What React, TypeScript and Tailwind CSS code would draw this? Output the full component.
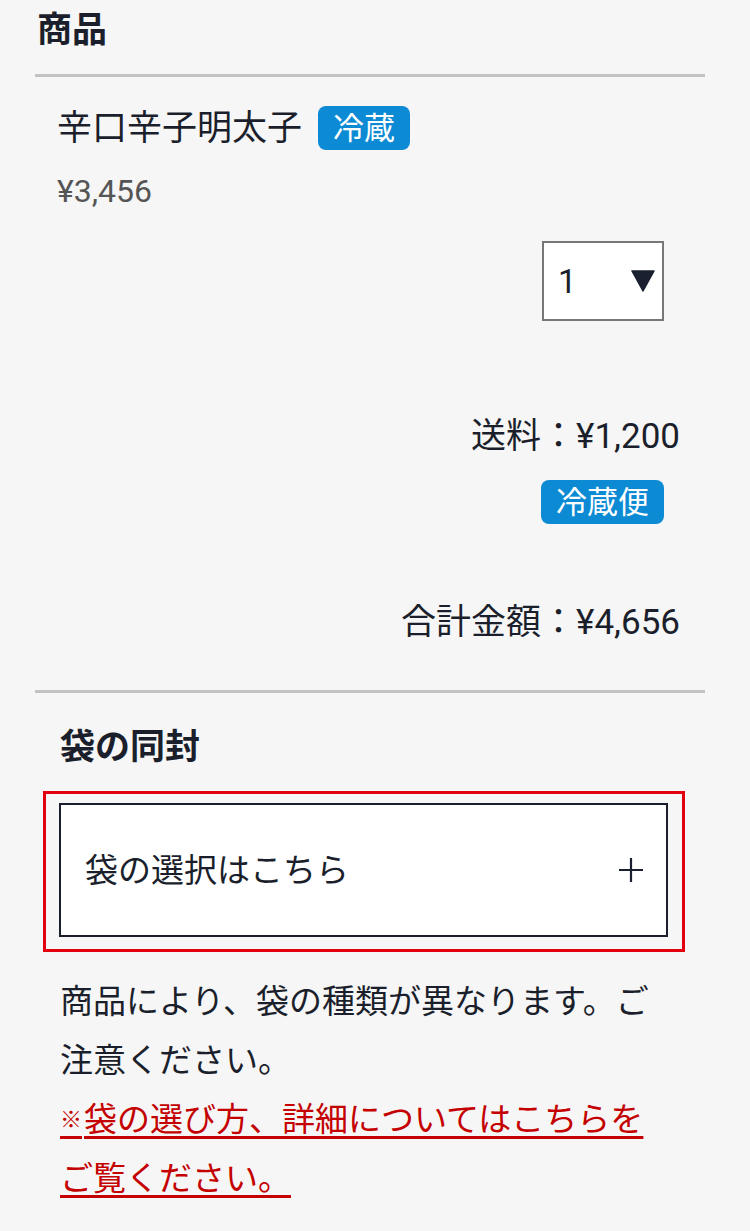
import { useState } from 'react';

const TriangleDown = () => (
  <svg width="24" height="22" viewBox="0 0 24 22" fill="none" xmlns="http://www.w3.org/2000/svg">
    <path d="M1 1H23L12 21Z" fill="#1b2030" stroke="#1b2030" strokeWidth="1.5" strokeLinejoin="round" />
  </svg>
);

const PlusIcon = () => (
  <svg width="26" height="26" viewBox="0 0 26 26" fill="none" xmlns="http://www.w3.org/2000/svg">
    <path d="M1 13H25M13 1V25" stroke="#1b2030" strokeWidth="2.2" />
  </svg>
);

const Badge = ({ label }: { label: string }) => (
  <span className="h-[44px] inline-flex items-center px-[15px] rounded-[8px] bg-[#0c8ad4] text-white text-[31px] leading-none">
    {label}
  </span>
);

const App = () => {
  const [qty] = useState(1);

  return (
    <div className="min-h-screen bg-[#f6f6f6] text-[#1b1f2c] font-['Roboto','Noto_Sans_CJK_JP',sans-serif]">
      <div className="ml-[35px] mr-[45px] pb-[40px]">
        {/* 商品 */}
        <h2 className="h-[60px] flex items-center pl-[2px] text-[35px] font-bold leading-none">商品</h2>
        <div className="h-[3px] mt-[14px] bg-[#c2c2c2]" />

        <div className="pl-[22px] pr-[25px]">
          <div className="h-[44px] mt-[29px] flex items-center gap-[16px]">
            <span className="text-[35px] leading-none">辛口辛子明太子</span>
            <Badge label="冷蔵" />
          </div>
          <div className="h-[40px] mt-[21px] flex items-center text-[32px] leading-none text-[#555]">¥3,456</div>

          <div className="mt-[30px] flex justify-end pr-[16px]">
            <div className="w-[122px] h-[80px] border-2 border-[#777] bg-white flex items-center justify-between pl-[14px] pr-[7px]">
              <span className="text-[33px] leading-none">{qty}</span>
              <TriangleDown />
            </div>
          </div>

          <div className="h-[44px] mt-[93px] flex items-center justify-end text-[35px] leading-none">送料：¥1,200</div>
          <div className="mt-[22px] flex justify-end pr-[16px]">
            <Badge label="冷蔵便" />
          </div>
          <div className="h-[44px] mt-[76px] flex items-center justify-end text-[35px] leading-none">合計金額：¥4,656</div>
        </div>

        <div className="h-[3px] mt-[46px] bg-[#c2c2c2]" />

        {/* 袋の同封 */}
        <h3 className="h-[44px] mt-[32px] flex items-center pl-[25px] text-[35px] font-bold leading-none">袋の同封</h3>

        <div className="mt-[22px] ml-[8px] mr-[20px] border-[3px] border-[#e3000f] pt-[9px] pb-[12px] pl-[13px] pr-[14px]">
          <button className="w-full h-[134px] border-2 border-[#1b1f2c] bg-white flex items-center justify-between pl-[24px] pr-[22px]">
            <span className="text-[33px] leading-none">袋の選択はこちら</span>
            <PlusIcon />
          </button>
        </div>

        <div className="mt-[20px] pl-[25px] pr-[45px] text-[33px] leading-[59px]">
          <p>商品により、袋の種類が異なります。ご注意ください。</p>
          <p>
            <a href="#" className="text-[#c40000] underline decoration-[3px] underline-offset-[5px]">
              <span className="text-[22px] align-[4px] pr-[2px]">※</span>
              <span>袋の選び方、詳細についてはこちらをご覧ください。</span>
            </a>
          </p>
        </div>
      </div>
    </div>
  );
};

export default App;
